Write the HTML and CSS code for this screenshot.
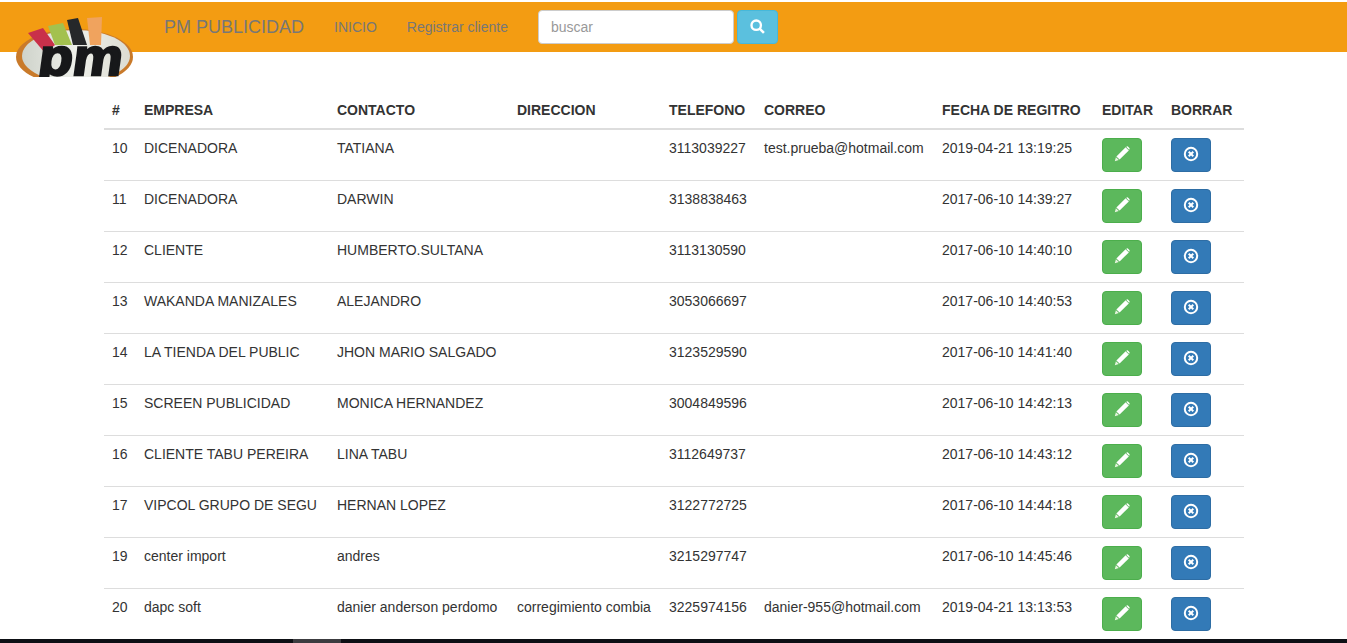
FILE: index.html
```html
<!DOCTYPE html>
<html lang="en">
<head>
    <meta charset="UTF-8">
    <title>PM Publicidad</title>
    <link rel="stylesheet" href="styles.css">
</head>
<body>
    <svg width="0" height="0" class="defs">
        <symbol id="i-pencil" viewBox="0 0 16 16">
            <path d="M11.6 1.2 14.8 4.4 5.6 13.6 2.4 10.4Z" fill="#fff"/>
            <path d="M12.6.6a1 1 0 0 1 1.3 0l1.5 1.5a1 1 0 0 1 0 1.3l-.3.3-2.8-2.8Z" fill="#fff"/>
            <path d="M1.9 11.2 4.8 14.1.8 15.2Z" fill="#e8f5e0"/>
        </symbol>
        <symbol id="i-remove" viewBox="0 0 16 16">
            <circle cx="8" cy="8" r="6.2" fill="none" stroke="#fff" stroke-width="2"/>
            <path d="M5.7 5.7l4.6 4.6M10.3 5.7l-4.6 4.6" stroke="#fff" stroke-width="2"/>
        </symbol>
    </svg>

    <nav class="navbar">
        <a class="brand" href="#">PM PUBLICIDAD</a>
        <a class="nav-link" href="#">INICIO</a>
        <a class="nav-link" href="#">Registrar cliente</a>
        <form class="search">
            <input type="text" placeholder="buscar">
            <button type="button" class="btn btn-info">
                <svg width="15" height="15" viewBox="0 0 14 14"><circle cx="5.8" cy="5.8" r="4.4" fill="none" stroke="#fff" stroke-width="2.2"/><path d="M9 9l4 4" stroke="#fff" stroke-width="2.4"/></svg>
            </button>
        </form>
    </nav>

    <svg class="logo" width="118" height="60" viewBox="0 0 118 60">
        <defs>
            <linearGradient id="logo-plate" x1="0" y1="0" x2="1" y2="0">
                <stop offset="0" stop-color="#cfd3cb"/>
                <stop offset=".5" stop-color="#eef0ea"/>
                <stop offset="1" stop-color="#dcdcd2"/>
            </linearGradient>
        </defs>
        <ellipse cx="58.5" cy="40" rx="58.5" ry="28" fill="#c97a2a"/>
        <ellipse cx="60" cy="39" rx="54" ry="26" fill="url(#logo-plate)"/>
        <path d="M12 16 27 11 39 28 29 36Z" fill="#c9304a"/>
        <path d="M32 9 47 6 56 28 39 28Z" fill="#a3c14f"/>
        <path d="M51 3 62 1 71 28 57 28Z" fill="#26282a"/>
        <path d="M71 1 86 0 85 28 74 28Z" fill="#f0a35e"/>
        <text class="logo-text" x="29" y="58" textLength="84" lengthAdjust="spacingAndGlyphs" transform="skewX(-8)">pm</text>
    </svg>

    <main class="content">
        <table class="table">
            <thead>
                <tr>
                    <th>#</th><th>EMPRESA</th><th>CONTACTO</th><th>DIRECCION</th><th>TELEFONO</th><th>CORREO</th><th>FECHA DE REGITRO</th><th>EDITAR</th><th>BORRAR</th>
                </tr>
            </thead>
            <tbody>
                <tr>
                    <td>10</td><td>DICENADORA</td><td>TATIANA</td><td></td><td>3113039227</td><td>test.prueba@hotmail.com</td><td>2019-04-21 13:19:25</td>
                    <td><a class="btn btn-success" href="#"><svg width="16" height="16"><use href="#i-pencil"/></svg></a></td>
                    <td><a class="btn btn-primary" href="#"><svg width="16" height="16"><use href="#i-remove"/></svg></a></td>
                </tr>
                <tr>
                    <td>11</td><td>DICENADORA</td><td>DARWIN</td><td></td><td>3138838463</td><td></td><td>2017-06-10 14:39:27</td>
                    <td><a class="btn btn-success" href="#"><svg width="16" height="16"><use href="#i-pencil"/></svg></a></td>
                    <td><a class="btn btn-primary" href="#"><svg width="16" height="16"><use href="#i-remove"/></svg></a></td>
                </tr>
                <tr>
                    <td>12</td><td>CLIENTE</td><td>HUMBERTO.SULTANA</td><td></td><td>3113130590</td><td></td><td>2017-06-10 14:40:10</td>
                    <td><a class="btn btn-success" href="#"><svg width="16" height="16"><use href="#i-pencil"/></svg></a></td>
                    <td><a class="btn btn-primary" href="#"><svg width="16" height="16"><use href="#i-remove"/></svg></a></td>
                </tr>
                <tr>
                    <td>13</td><td>WAKANDA MANIZALES</td><td>ALEJANDRO</td><td></td><td>3053066697</td><td></td><td>2017-06-10 14:40:53</td>
                    <td><a class="btn btn-success" href="#"><svg width="16" height="16"><use href="#i-pencil"/></svg></a></td>
                    <td><a class="btn btn-primary" href="#"><svg width="16" height="16"><use href="#i-remove"/></svg></a></td>
                </tr>
                <tr>
                    <td>14</td><td>LA TIENDA DEL PUBLIC</td><td>JHON MARIO SALGADO</td><td></td><td>3123529590</td><td></td><td>2017-06-10 14:41:40</td>
                    <td><a class="btn btn-success" href="#"><svg width="16" height="16"><use href="#i-pencil"/></svg></a></td>
                    <td><a class="btn btn-primary" href="#"><svg width="16" height="16"><use href="#i-remove"/></svg></a></td>
                </tr>
                <tr>
                    <td>15</td><td>SCREEN PUBLICIDAD</td><td>MONICA HERNANDEZ</td><td></td><td>3004849596</td><td></td><td>2017-06-10 14:42:13</td>
                    <td><a class="btn btn-success" href="#"><svg width="16" height="16"><use href="#i-pencil"/></svg></a></td>
                    <td><a class="btn btn-primary" href="#"><svg width="16" height="16"><use href="#i-remove"/></svg></a></td>
                </tr>
                <tr>
                    <td>16</td><td>CLIENTE TABU PEREIRA</td><td>LINA TABU</td><td></td><td>3112649737</td><td></td><td>2017-06-10 14:43:12</td>
                    <td><a class="btn btn-success" href="#"><svg width="16" height="16"><use href="#i-pencil"/></svg></a></td>
                    <td><a class="btn btn-primary" href="#"><svg width="16" height="16"><use href="#i-remove"/></svg></a></td>
                </tr>
                <tr>
                    <td>17</td><td>VIPCOL GRUPO DE SEGU</td><td>HERNAN LOPEZ</td><td></td><td>3122772725</td><td></td><td>2017-06-10 14:44:18</td>
                    <td><a class="btn btn-success" href="#"><svg width="16" height="16"><use href="#i-pencil"/></svg></a></td>
                    <td><a class="btn btn-primary" href="#"><svg width="16" height="16"><use href="#i-remove"/></svg></a></td>
                </tr>
                <tr>
                    <td>19</td><td>center import</td><td>andres</td><td></td><td>3215297747</td><td></td><td>2017-06-10 14:45:46</td>
                    <td><a class="btn btn-success" href="#"><svg width="16" height="16"><use href="#i-pencil"/></svg></a></td>
                    <td><a class="btn btn-primary" href="#"><svg width="16" height="16"><use href="#i-remove"/></svg></a></td>
                </tr>
                <tr>
                    <td>20</td><td>dapc soft</td><td>danier anderson perdomo</td><td>corregimiento combia</td><td>3225974156</td><td>danier-955@hotmail.com</td><td>2019-04-21 13:13:53</td>
                    <td><a class="btn btn-success" href="#"><svg width="16" height="16"><use href="#i-pencil"/></svg></a></td>
                    <td><a class="btn btn-primary" href="#"><svg width="16" height="16"><use href="#i-remove"/></svg></a></td>
                </tr>
            </tbody>
        </table>
    </main>

    <div class="taskbar"><span class="taskbar-item"></span></div>
</body>
</html>
```

FILE: styles.css
```css
* {
    box-sizing: border-box;
}
html, body {
    height: 100%;
}
body {
    margin: 0;
    padding-top: 2px;
    display: flex;
    flex-direction: column;
    overflow: hidden;
    position: relative;
    background: #fff;
    color: #333;
    font-family: "Liberation Sans", Arial, sans-serif;
    font-size: 14px;
    line-height: 20px;
}
a {
    text-decoration: none;
}
.defs {
    position: absolute;
}
.navbar {
    flex: none;
    height: 50px;
    padding-left: 164px;
    display: flex;
    align-items: center;
    background: #f39c12;
}
.brand {
    color: #777;
    font-size: 18px;
    margin-right: 30px;
}
.nav-link {
    color: #777;
    margin-right: 30px;
}
.search {
    display: flex;
    gap: 3px;
}
.search input {
    width: 196px;
    height: 34px;
    padding: 6px 12px;
    border: 1px solid #ccc;
    border-radius: 4px;
    color: #555;
    font: inherit;
}
.search input::placeholder {
    color: #999;
}
.logo {
    position: absolute;
    left: 16px;
    top: 17px;
    filter: blur(0.4px);
}
.logo-text {
    font-family: "Liberation Sans", sans-serif;
    font-weight: bold;
    font-size: 52px;
    fill: #17181a;
    stroke: #17181a;
    stroke-width: 2.5;
}
.content {
    flex: 1;
    padding: 40px 103px 0 104px;
}
.table {
    width: 100%;
    table-layout: fixed;
    border-collapse: collapse;
    border-spacing: 0;
}
.table th, .table td {
    padding: 8px;
    text-align: left;
    vertical-align: top;
    white-space: nowrap;
}
.table th {
    border-bottom: 2px solid #ddd;
}
.table td {
    border-top: 1px solid #ddd;
}
.table tbody tr:first-child td {
    border-top: 0;
}
.table th:nth-child(1) { width: 32px; }
.table th:nth-child(2) { width: 193px; }
.table th:nth-child(3) { width: 180px; }
.table th:nth-child(4) { width: 152px; }
.table th:nth-child(5) { width: 95px; }
.table th:nth-child(6) { width: 178px; }
.table th:nth-child(7) { width: 160px; }
.table th:nth-child(8) { width: 69px; }
.table th:nth-child(9) { width: 81px; }
.btn {
    display: flex;
    align-items: center;
    justify-content: center;
    height: 34px;
    width: 40px;
    padding: 0 0 2px;
    border: 1px solid transparent;
    border-radius: 4px;
}
.btn-success {
    background: #5cb85c;
    border-color: #4cae4c;
}
.btn-primary {
    background: #337ab7;
    border-color: #2e6da4;
}
.btn-info {
    width: 41px;
    background: #5bc0de;
    border-color: #46b8da;
}
.taskbar {
    flex: none;
    height: 4px;
    padding-left: 293px;
    background: #0d0f14;
}
.taskbar-item {
    display: block;
    width: 48px;
    height: 4px;
    background: #3c3c40;
}
```
